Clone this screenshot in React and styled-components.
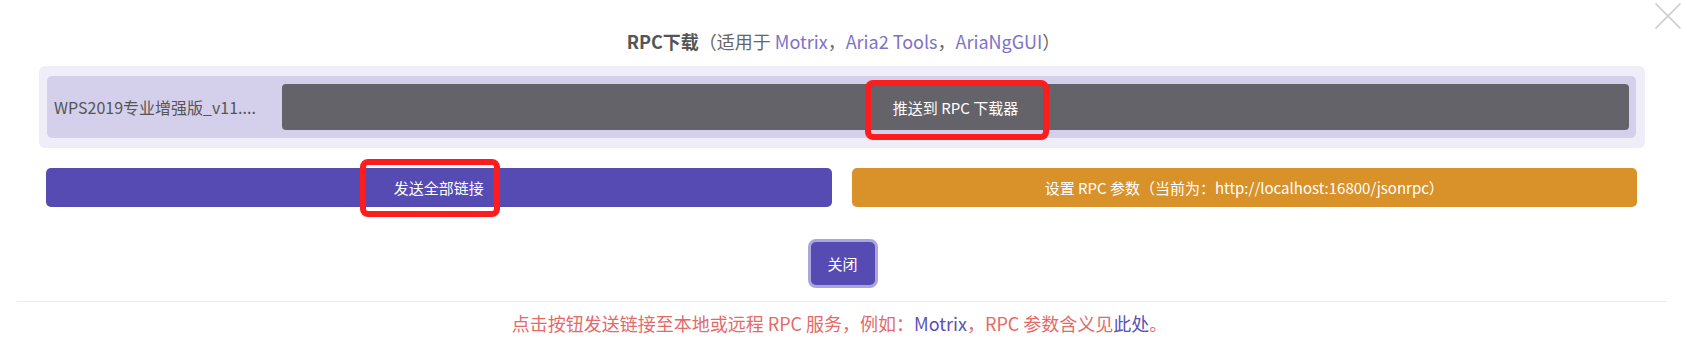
import React from "react";
import styled, { createGlobalStyle } from "styled-components";

const Global = createGlobalStyle`
  html, body { margin: 0; padding: 0; background: #ffffff; }
  body { font-family: "Noto Sans CJK SC", "Noto Sans", sans-serif; }
  * { box-sizing: border-box; }
`;

const Dialog = styled.div`
  position: relative;
  width: 1687px;
  height: 339px;
  padding-top: 29px;
  background: #fff;
  overflow: hidden;
`;

const CloseIcon = styled.button`
  position: absolute;
  top: 1px;
  right: 4px;
  width: 30px;
  height: 30px;
  padding: 0;
  border: 0;
  background: transparent;
  display: flex;
  align-items: center;
  justify-content: center;
`;

const Title = styled.div`
  text-align: center;
  font-size: 18px;
  line-height: 24px;
  color: #666;
`;

const Strong = styled.span`
  font-weight: 700;
  color: #555;
`;

const TitleLink = styled.span`
  color: ${(p) => p.$color || "#7d72c6"};
`;

const Panel = styled.div`
  margin: 13px 42px 0 39px;
  padding: 10px 9px 10px 8px;
  background: #efedf8;
  border-radius: 6px;
`;

const FileRow = styled.div`
  display: flex;
  align-items: center;
  padding: 8px 7px;
  background: #d4d0ec;
  border-radius: 5px;
`;

const FileName = styled.div`
  width: 228px;
  flex: none;
  font-size: 16px;
  color: #555;
  white-space: nowrap;
  overflow: hidden;
`;

const PushButton = styled.button`
  flex: 1;
  height: 46px;
  border: 0;
  border-radius: 4px;
  background: #646369;
  color: #fff;
  font-family: inherit;
  font-size: 15px;
`;

const ActionRow = styled.div`
  display: grid;
  grid-template-columns: 1fr 1fr;
  gap: 20px;
  margin: 20px 50px 0 46px;
`;

const ActionButton = styled.button`
  height: 39px;
  border: 0;
  border-radius: 5px;
  background: ${(p) => (p.$variant === "warn" ? "#d9912a" : "#564bb3")};
  color: #fff;
  font-family: inherit;
  font-size: 15px;
`;

const CloseRow = styled.div`
  display: flex;
  justify-content: center;
  margin-top: 32px;
  padding-right: 2px;
`;

const CloseButton = styled.button`
  width: 70px;
  height: 49px;
  border: 3px solid #aba5de;
  border-radius: 8px;
  background: #564bb3;
  color: #fff;
  font-family: inherit;
  font-size: 15px;
`;

const Divider = styled.div`
  height: 1px;
  margin: 13px 20px 0 17px;
  background: #ececec;
`;

const Footer = styled.div`
  margin-top: 9px;
  text-align: center;
  font-size: 18px;
  line-height: 24px;
  color: #e46a6a;
  padding-right: 8px;
`;

const Mark = styled.div`
  position: absolute;
  border: 6px solid #ff1c1c;
  border-radius: 8px;
  pointer-events: none;
`;

export default function App() {
  return (
    <>
      <Global />
      <Dialog>
        <CloseIcon aria-label="close">
          <svg width="28" height="28" viewBox="0 0 28 28">
            <path d="M1.5 1.5 L26.5 26.5 M26.5 1.5 L1.5 26.5" stroke="#c9c9c9" strokeWidth="1.6" fill="none" />
          </svg>
        </CloseIcon>
        <Title>
          <Strong>RPC下载</Strong>（适用于 <TitleLink>Motrix</TitleLink>，<TitleLink>Aria2 Tools</TitleLink>，<TitleLink>AriaNgGUI</TitleLink>）
        </Title>
        <Panel>
          <FileRow>
            <FileName>WPS2019专业增强版_v11....</FileName>
            <PushButton>推送到 RPC 下载器</PushButton>
          </FileRow>
        </Panel>
        <ActionRow>
          <ActionButton>发送全部链接</ActionButton>
          <ActionButton $variant="warn">设置 RPC 参数（当前为：http://localhost:16800/jsonrpc）</ActionButton>
        </ActionRow>
        <CloseRow>
          <CloseButton>关闭</CloseButton>
        </CloseRow>
        <Divider />
        <Footer>
          点击按钮发送链接至本地或远程 RPC 服务，例如：<TitleLink $color="#5b50b5">Motrix</TitleLink>，RPC 参数含义见<TitleLink $color="#5b50b5">此处</TitleLink>。
        </Footer>
        <Mark style={{ left: 865, top: 80, width: 184, height: 60 }} />
        <Mark style={{ left: 360, top: 159, width: 140, height: 58 }} />
      </Dialog>
    </>
  );
}
